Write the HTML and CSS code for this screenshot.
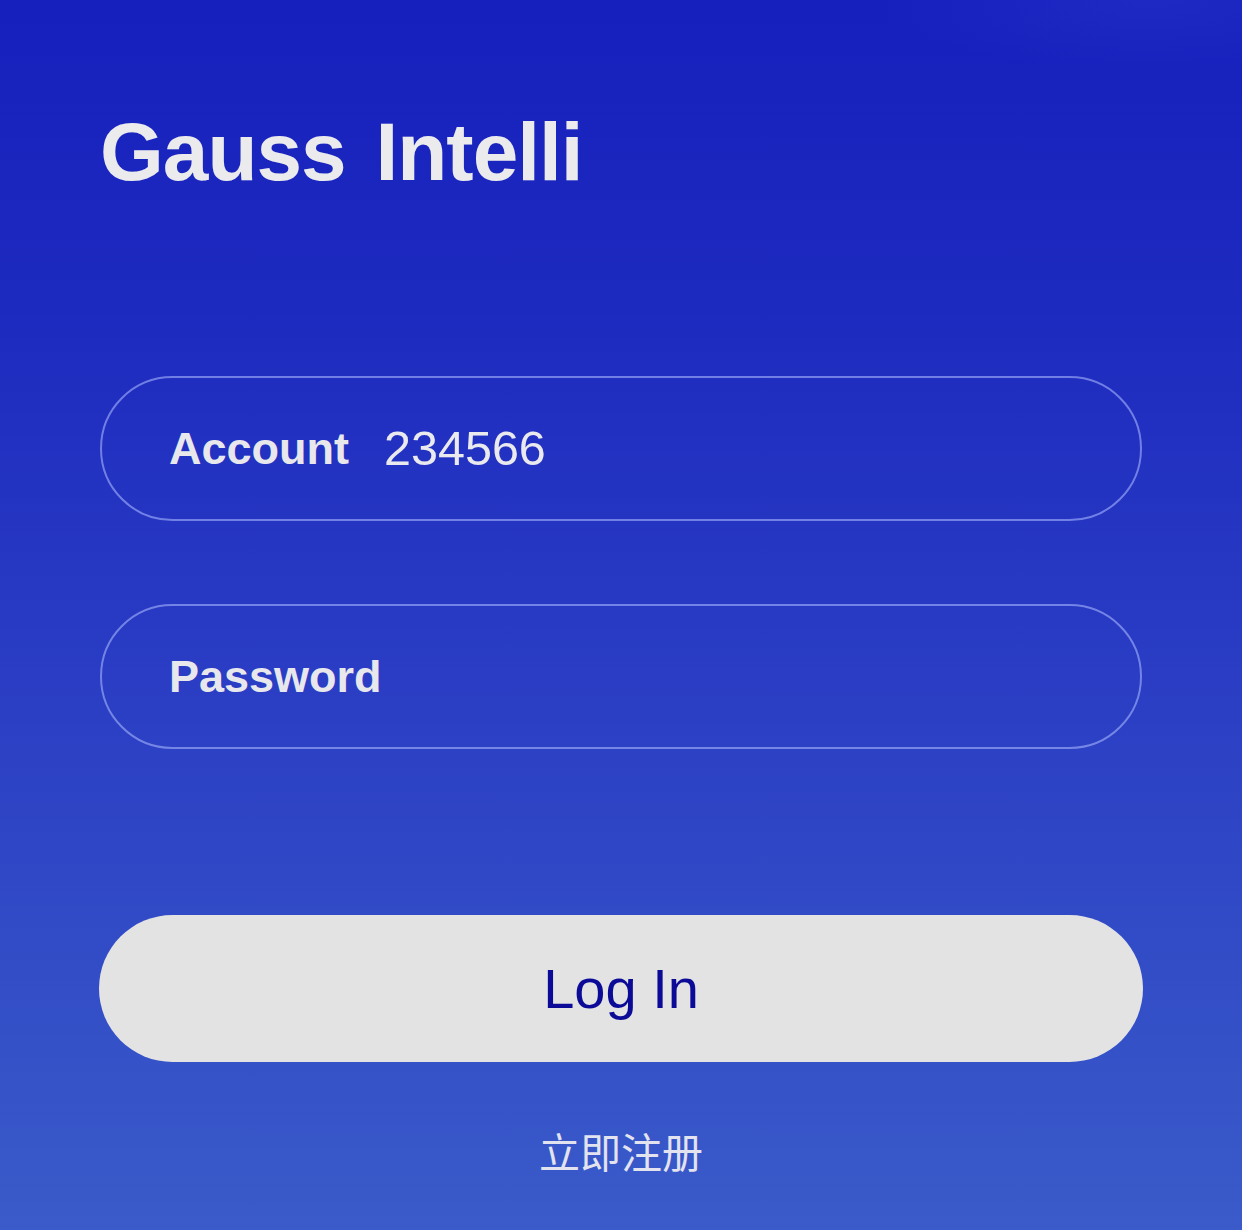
FILE: index.html
```html
<!DOCTYPE html>
<html lang="en">
<head>
<meta charset="utf-8">
<title>Gauss Intelli</title>
<link rel="stylesheet" href="styles.css">
</head>
<body>
<main class="page">
  <h1 class="brand">Gauss Intelli</h1>
  <form class="login">
    <label class="field field-account">
      <span class="field-label">Account</span>
      <span class="field-value">234566</span>
    </label>
    <label class="field field-password">
      <span class="field-label">Password</span>
    </label>
    <button type="button" class="login-btn">Log In</button>
    <a class="register" href="#">立即注册</a>
  </form>
</main>
</body>
</html>
```

FILE: styles.css
```css
html, body {
  margin: 0;
  padding: 0;
}

body {
  width: 1242px;
  height: 1230px;
  overflow: hidden;
  background:
    radial-gradient(ellipse 280px 70px at 1150px 0px, rgba(60, 70, 215, 0.22), rgba(60, 70, 215, 0) 100%),
    linear-gradient(180deg, #1620bd 0%, #1d2abf 25%, #2a3dc4 55%, #3a5bc9 100%);
  font-family: "Liberation Sans", Arial, "Noto Sans CJK SC", sans-serif;
  color: #e8e8ec;
}

.page {
  display: flex;
  flex-direction: column;
  padding: 111px 100px 0 100px;
}

.brand {
  margin: 0;
  font-size: 82px;
  line-height: 82px;
  font-weight: 700;
  letter-spacing: -1px;
  word-spacing: 8px;
  color: #ebebed;
}

.login {
  display: flex;
  flex-direction: column;
  margin-top: 183px;
}

.field {
  box-sizing: border-box;
  height: 145px;
  border: 2px solid rgba(170, 185, 255, 0.58);
  border-radius: 73px;
  display: flex;
  align-items: center;
  padding-left: 67px;
}

.field-password {
  margin-top: 83px;
}

.field-label {
  font-size: 45px;
  line-height: 1;
  font-weight: 700;
  color: #e7e7ec;
}

.field-value {
  margin-left: 35px;
  font-size: 48.5px;
  line-height: 1;
  font-weight: 400;
  color: #e9e9ee;
}

.login-btn {
  margin: 166px -1px 0 -1px;
  height: 147px;
  border: none;
  border-radius: 74px;
  background: #e3e3e3;
  color: #0b0b98;
  font-family: "Liberation Sans", Arial, sans-serif;
  font-size: 56px;
  line-height: 1;
  padding: 0;
  cursor: pointer;
}

.register {
  align-self: center;
  margin-top: 68px;
  font-family: "Noto Sans CJK SC", "Noto Sans CJK JP", sans-serif;
  font-size: 41px;
  line-height: 1;
  color: #e2e3ee;
  text-decoration: none;
}
```
